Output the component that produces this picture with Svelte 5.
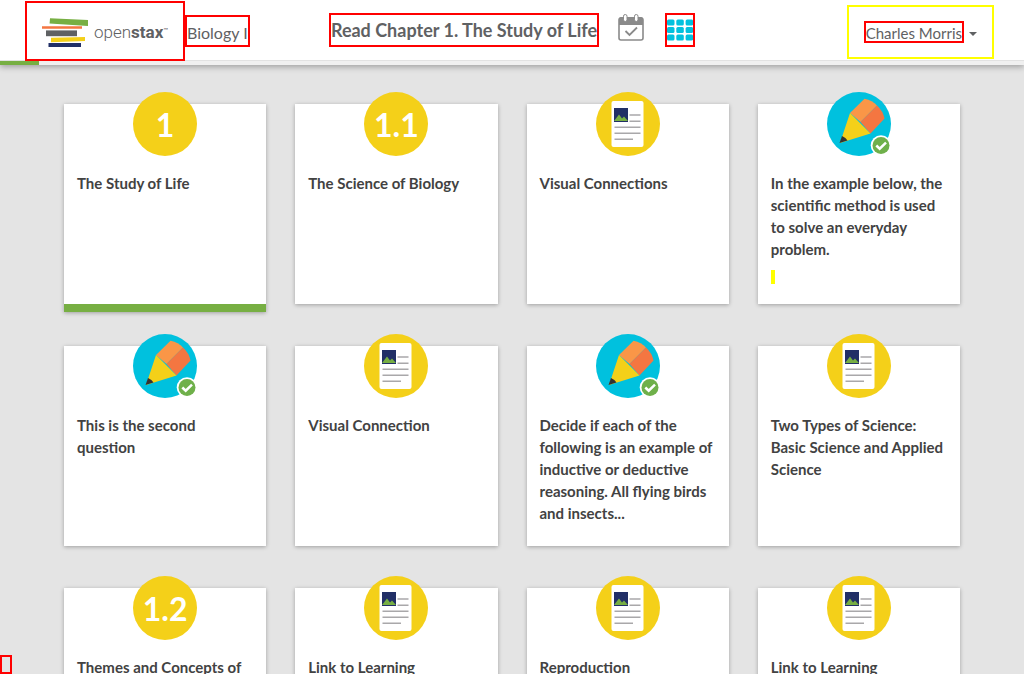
<script>
  const cards = [
    { type: 'number', label: '1', title: 'The Study of Life', current: true },
    { type: 'number', label: '1.1', title: 'The Science of Biology' },
    { type: 'reading', title: 'Visual Connections' },
    { type: 'exercise', title: 'In the example below, the scientific method is used to solve an everyday problem.', marker: true },
    { type: 'exercise', title: 'This is the second question' },
    { type: 'reading', title: 'Visual Connection' },
    { type: 'exercise', title: 'Decide if each of the following is an example of inductive or deductive reasoning. All flying birds and insects...' },
    { type: 'reading', title: 'Two Types of Science: Basic Science and Applied Science' },
    { type: 'number', label: '1.2', title: 'Themes and Concepts of' },
    { type: 'reading', title: 'Link to Learning' },
    { type: 'reading', title: 'Reproduction' },
    { type: 'reading', title: 'Link to Learning' }
  ];
  const progress = 3.8;
</script>

<div class="app">
  <header>
    <nav class="bar">
      <div class="left">
        <a class="brand" href="#home" aria-label="OpenStax">
          <svg width="48" height="30" viewBox="0 0 48 30" aria-hidden="true">
            <path d="M9 0.2 47 2v6L8.6 5.6z" fill="#77af43" />
            <path d="M1 8.200h40v2.600H1z" fill="#f47641" />
            <path d="M5 12.400h31v5.800H5z" fill="#5f6163" />
            <path d="M10 19.800 44 19v4L10 24.200z" fill="#f4d019" />
            <path d="M7.500 25h32.500v4H7.500z" fill="#212f66" />
          </svg>
          <span class="word">open<b>stax</b></span><span class="tm">™</span>
        </a>
        <a class="course" href="#course">Biology I</a>
      </div>
      <div class="center">
        <h1>Read Chapter 1. The Study of Life</h1>
        <button class="cal" aria-label="Due date">
          <svg width="26" height="28" viewBox="0 0 26 28" aria-hidden="true">
            <path d="M3 4h20a2 2 0 0 1 2 2v18a2 2 0 0 1-2 2H3a2 2 0 0 1-2-2V6a2 2 0 0 1 2-2z" fill="#fff" stroke="#8a8a8a" stroke-width="1.600" />
            <path d="M1 11V5a2 2 0 0 1 2-2h20a2 2 0 0 1 2 2v6z" fill="#8a8a8a" />
            <rect x="5.500" y="0.500" width="3.500" height="7" rx="1.700" fill="#fff" stroke="#8a8a8a" />
            <rect x="16.500" y="0.500" width="3.500" height="7" rx="1.700" fill="#fff" stroke="#8a8a8a" />
            <path d="m7.500 17 4 4 7.500-7.500" fill="none" stroke="#8a8a8a" stroke-width="1.800" />
          </svg>
        </button>
        <button class="tiles" aria-label="Milestones">
          <svg width="26" height="22" viewBox="0 0 26 22" fill="#00c1de" aria-hidden="true">
            {#each [0.5, 8, 15.5] as y}
              {#each [0, 9.3, 18.6] as x}
                <rect {x} {y} width="7.500" height="6" rx="1.500" />
              {/each}
            {/each}
          </svg>
        </button>
      </div>
      <div class="right">
        <button class="user"><span class="name">Charles Morris</span><span class="caret"></span></button>
      </div>
    </nav>
    <div class="progress"><div class="done" style="width: {progress}%"></div></div>
  </header>

  <main>
    {#each cards as card}
      <a class="card" class:current={card.current} href="#step">
        <span class="badge" class:blue={card.type === 'exercise'}>
          {#if card.type === 'number'}
            {card.label}
          {:else if card.type === 'reading'}
            <svg width="64" height="64" viewBox="0 0 64 64" aria-hidden="true">
              <rect x="15.500" y="9" width="32" height="46" rx="2" fill="#fff" />
              <rect x="18" y="16" width="14" height="14" fill="#212f66" />
              <path d="M18 29 23 22.500l3 4 2-2 4 4.500z" fill="#77af43" />
              <path d="M33.500 23h11M33.500 29.300h11M18.500 35.300h26M18.500 41.300h26M18.500 47.300h18.500" stroke="#a9a8aa" stroke-width="1.500" />
            </svg>
          {:else}
            <svg width="64" height="64" viewBox="0 0 64 64" aria-hidden="true">
              <path d="m23 21 14.500-14.300Q45.500 8.500 50 13.500L33.500 30z" fill="#fa9647" />
              <path d="m33.500 30 16.500-16.500q6 5.500 7.500 13L43.500 41.500z" fill="#f47641" />
              <path d="M23 21 43.500 41.500 13 51z" fill="#f4d019" />
              <path d="M15 44q4 1.500 5.500 4.500L12.500 51z" fill="#333" />
              <circle cx="54" cy="53.500" r="10.300" fill="#fff" />
              <circle cx="54" cy="53.500" r="8.500" fill="#6fb04a" />
              <path d="m49.300 53.500 3.400 3.200 6.300-6" fill="none" stroke="#fff" stroke-width="2.500" />
            </svg>
          {/if}
        </span>
        <span class="title">{card.title}</span>
        {#if card.marker}<span class="marker"></span>{/if}
      </a>
    {/each}
  </main>
  <div class="corner"></div>
</div>

<style>
  :global(body) { background: #e4e4e4; }
  .app {
    box-sizing: border-box;
    height: 100vh;
    overflow: hidden;
    font-family: Lato, sans-serif;
    color: #424242;
    background: #e4e4e4;
  }
  .app * { box-sizing: border-box; }
  a { color: inherit; text-decoration: none; }
  button { font: inherit; color: inherit; background: none; border: 0; padding: 0; }
  svg { display: block; }
  header { position: relative; background: #fff; box-shadow: 0 2px 6px rgba(0, 0, 0, 0.3); color: #5f6163; }
  .bar {
    display: grid;
    grid-template-columns: 1fr auto 1fr;
    align-items: center;
    height: 60px;
    padding: 0 25px;
  }
  .left { display: flex; align-items: center; height: 60px; padding-top: 2px; }
  .brand {
    position: relative;
    z-index: 1;
    display: flex;
    align-items: center;
    width: 160px;
    height: 60px;
    padding: 4px 0 0 14px;
    border: 2px solid #f00;
  }
  .word { margin-left: 5px; padding-bottom: 2px; font: 300 17px/20px Roboto, sans-serif; }
  .word b { font-weight: 700; }
  .tm { padding-bottom: 6px; font-size: 6px; line-height: 8px; }
  .course {
    height: 32px;
    border: 2px solid #f00;
    font-size: 16px;
    line-height: 32px;
    white-space: nowrap;
  }
  .center { display: flex; align-items: center; }
  h1 {
    margin: 0;
    border: 2px solid #f00;
    height: 34px;
    font-size: 18px;
    line-height: 30px;
    font-weight: 700;
    white-space: nowrap;
  }
  .cal { margin: 0 21px 4px 19px; }
  .tiles { width: 30px; height: 34px; border: 2px solid #f00; display: grid; place-items: center; }
  .right { display: flex; justify-content: flex-end; padding: 4px 5px 0 0; }
  .user {
    display: flex;
    align-items: center;
    gap: 5px;
    height: 54px;
    padding: 0 15px;
    border: 2px solid #ff0;
    font-size: 15px;
  }
  .name { height: 22px; line-height: 20px; border: 2px solid #f00; white-space: nowrap; }
  .caret { border: 4px solid transparent; border-top-color: #5f6163; border-bottom: 0; margin-top: 3px; }
  .progress { height: 5px; background: #f0f0f0; border-top: 1px solid #e2e2e2; }
  .done { height: 4px; background: #77af43; }
  main {
    display: grid;
    grid-template-columns: repeat(4, minmax(0, 1fr));
    gap: 42px 29px;
    padding: 39px 64px;
  }
  .card {
    position: relative;
    height: 200px;
    padding: 68px 13px 0;
    background: #fff;
    box-shadow: 0 1px 4px rgba(0, 0, 0, 0.3);
    font-size: 15px;
    line-height: 22px;
    font-weight: 700;
  }
  .current { height: 208px; margin-bottom: -8px; border-bottom: 8px solid #77af43; }
  .badge {
    position: absolute;
    top: -12px;
    left: calc(50% - 32px);
    width: 64px;
    height: 64px;
    border-radius: 50%;
    background: #f4d019;
    color: #fff;
    font-size: 32px;
    line-height: 66px;
    text-align: center;
  }
  .blue { background: #00c1de; }
  .badge svg { overflow: visible; }
  .title { display: block; }
  .marker { display: block; width: 4px; height: 14px; margin-top: 10px; background: #ff0; }
  .corner { position: fixed; left: 0; bottom: 0; width: 12px; height: 19px; border: 2px solid #f00; }
</style>
